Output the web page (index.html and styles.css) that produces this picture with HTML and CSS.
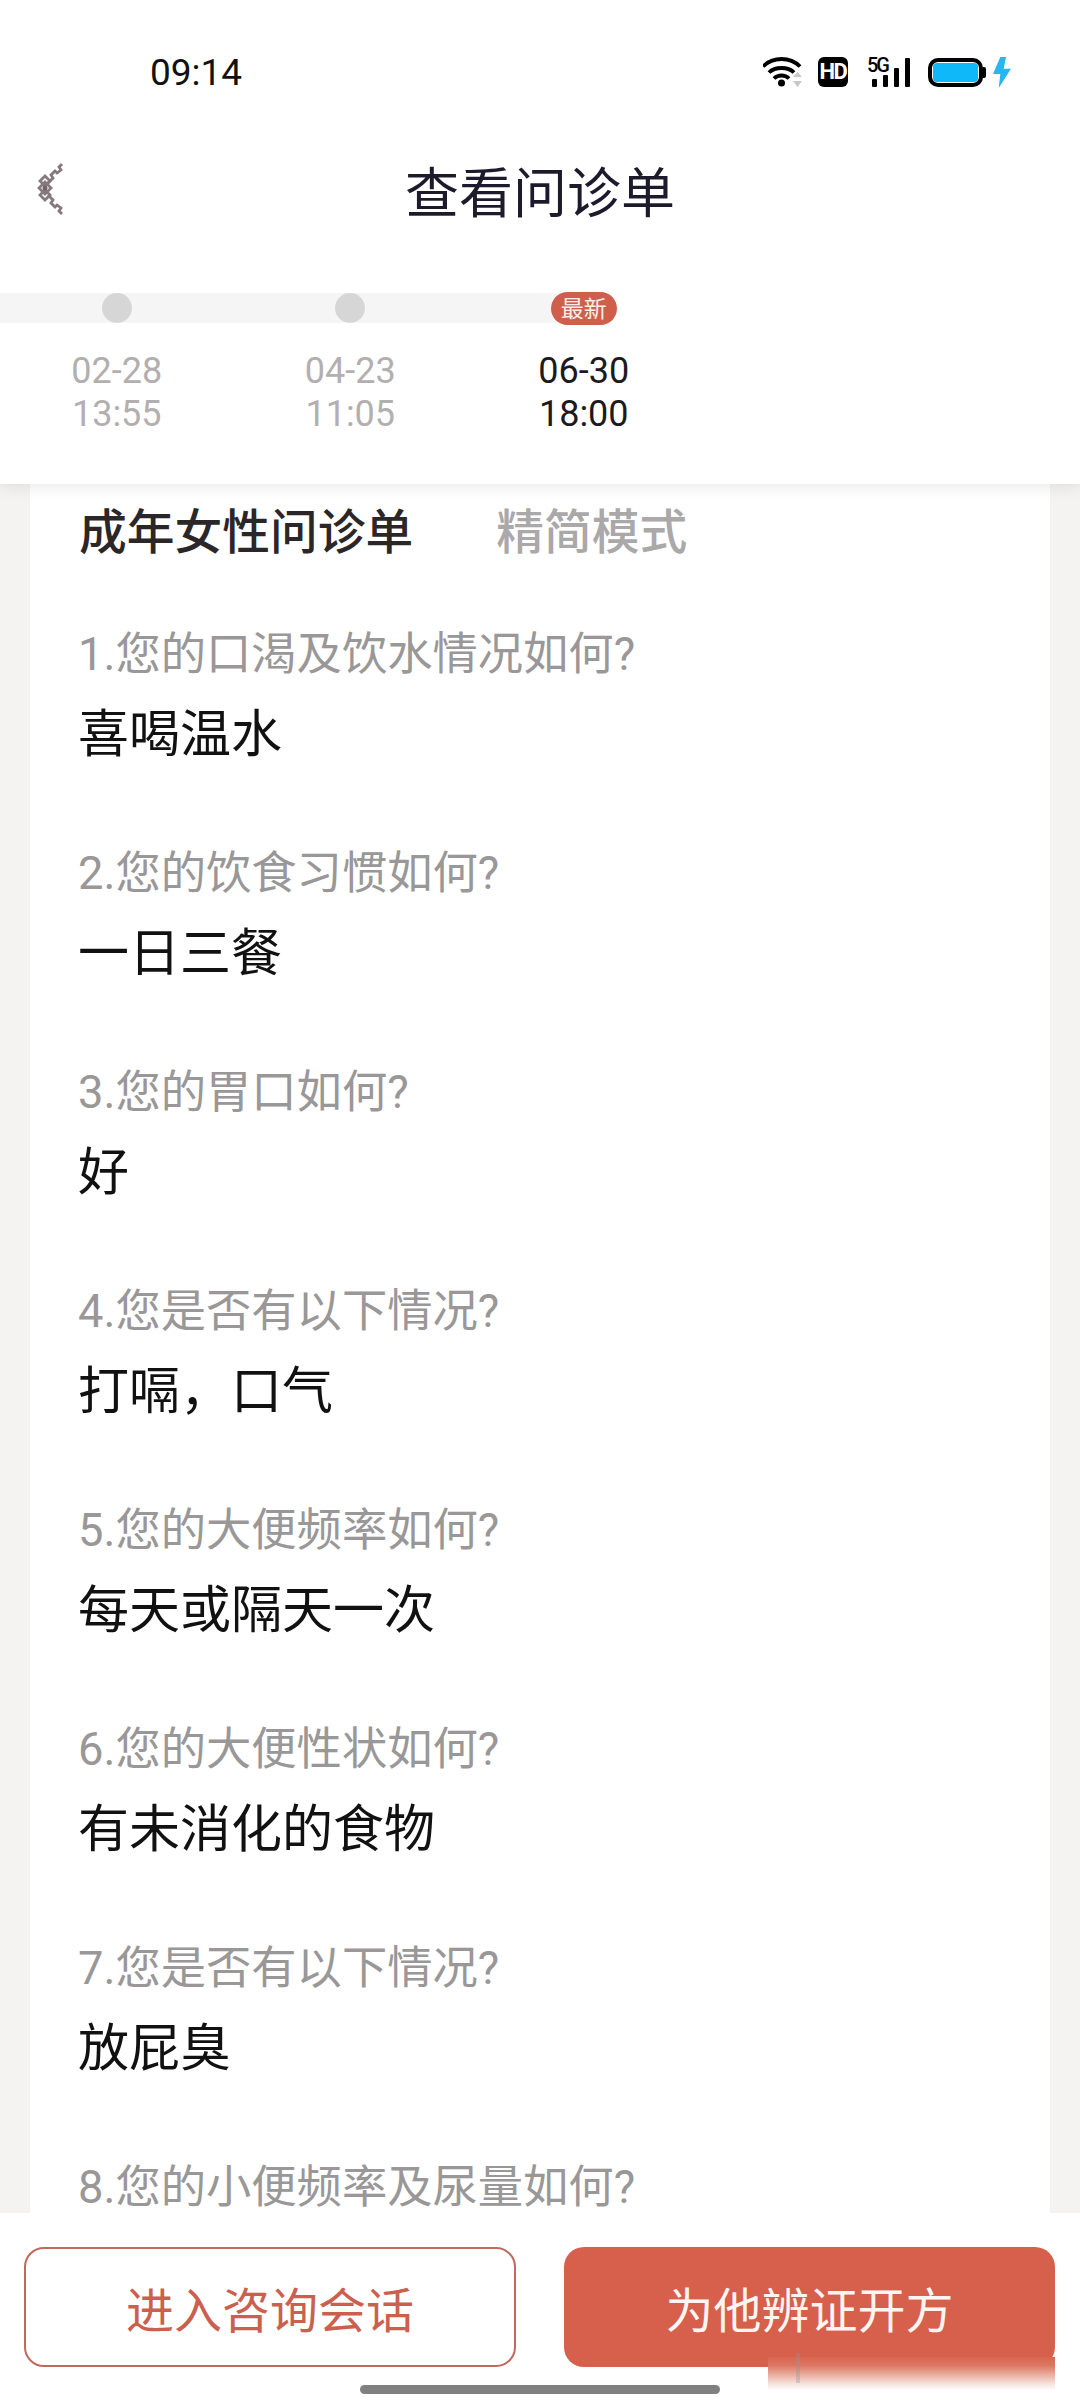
FILE: index.html

```html
<!DOCTYPE html>
<html lang="zh-CN">
<head>
  <meta charset="UTF-8">
  <meta name="viewport" content="width=device-width, initial-scale=1">
  <title>查看问诊单</title>
  <link rel="stylesheet" href="styles.css">
</head>
<body>
<div class="app">

  <header class="top">
    <div class="status">
      <span class="time">09:14</span>
      <div class="status-icons">
        <svg class="ic-wifi" width="42" height="30" viewBox="0 0 42 30">
          <g fill="none" stroke="#000" stroke-width="3.8">
            <path d="M0 9.500C10 -0.500 27 -0.500 37 9.500"/>
            <path d="M6 15.500C12 9.500 25 9.500 31 15.500"/>
            <path d="M11 21.500C15 17.500 22 17.500 26 21.500"/>
          </g>
          <circle cx="18.500" cy="26" r="3.500" fill="#000"/>
          <path d="M34.500 15l4.500 5h-9zM34.500 30l4.500-6h-9z" fill="#c8c8c8"/>
        </svg>
        <span class="ic-hd">HD</span>
        <div class="ic-signal">
          <span class="ic-5g">5G</span>
          <i class="bar b1"></i><i class="bar b2"></i><i class="bar b3"></i><i class="bar b4"></i>
        </div>
        <div class="ic-batt"><div class="batt-fill"></div></div>
        <i class="batt-tip"></i>
        <svg class="ic-bolt" width="18" height="31" viewBox="0 0 18 31">
          <path d="M7.300 0H13L10.700 11.700H18L5.700 31 7.300 17H0z" fill="#29b6f0"/>
        </svg>
      </div>
    </div>

    <div class="nav">
      <!-- back arrow in the app is a knotted pattern -->
      <svg class="back" width="30" height="56" viewBox="36 160 30 56">
        <g fill="none" stroke="#85797d" stroke-width="2.800">
          <path d="M62 164l-3 3 2 3-4 3-2-2-4 4 2 3-5 5"/>
          <path d="M62 214l-3-3 2-3-4-3-2 2-4-4 2-3-5-5"/>
          <path d="M39 188l6-6 6 6-6 6z"/>
          <path d="M45 176l5 5-5 5-5-5z"/>
          <path d="M45 190l5 5-5 5-5-5z"/>
        </g>
        <circle cx="45" cy="188" r="2.500" fill="#6f6468"/>
      </svg>
      <h1 class="nav-title">查看问诊单</h1>
    </div>

    <div class="timeline">
      <div class="tl-item">
        <div class="rail"><span class="dot"></span></div>
        <div class="tl-date">02-28<br>13:55</div>
      </div>
      <div class="tl-item">
        <div class="rail"><span class="dot"></span></div>
        <div class="tl-date">04-23<br>11:05</div>
      </div>
      <div class="tl-item active">
        <div class="rail rail-end"><span class="badge">最新</span></div>
        <div class="tl-date">06-30<br>18:00</div>
      </div>
    </div>
  </header>

  <main class="content">
    <div class="card">
      <div class="tabs">
        <span class="tab-on">成年女性问诊单</span>
        <span class="tab-off">精简模式</span>
      </div>

      <div class="qa">
        <p class="q">1.您的口渴及饮水情况如何?</p>
        <p class="a">喜喝温水</p>
      </div>
      <div class="qa">
        <p class="q">2.您的饮食习惯如何?</p>
        <p class="a">一日三餐</p>
      </div>
      <div class="qa">
        <p class="q">3.您的胃口如何?</p>
        <p class="a">好</p>
      </div>
      <div class="qa">
        <p class="q">4.您是否有以下情况?</p>
        <p class="a">打嗝，口气</p>
      </div>
      <div class="qa">
        <p class="q">5.您的大便频率如何?</p>
        <p class="a">每天或隔天一次</p>
      </div>
      <div class="qa">
        <p class="q">6.您的大便性状如何?</p>
        <p class="a">有未消化的食物</p>
      </div>
      <div class="qa">
        <p class="q">7.您是否有以下情况?</p>
        <p class="a">放屁臭</p>
      </div>
      <div class="qa">
        <p class="q">8.您的小便频率及尿量如何?</p>
      </div>
    </div>
  </main>

  <footer class="footer">
    <div class="btns">
      <button class="btn btn-line">进入咨询会话</button>
      <button class="btn btn-fill">为他辨证开方</button>
    </div>
    <div class="home-bar"></div>
    <div class="smear"><i></i></div>
  </footer>

</div>
</body>
</html>
```

FILE: styles.css

```css
* {
  box-sizing: border-box;
}
html, body {
  margin: 0;
  padding: 0;
}
body {
  width: 1080px;
  height: 2400px;
  overflow: hidden;
  background-color: #fff;
  font-family: Roboto, "Noto Sans CJK SC", sans-serif;
}
.app {
  display: flex;
  flex-direction: column;
  height: 2400px;
  background-color: #f4f3f1;
}

/* top part */
.top {
  position: relative;
  z-index: 2;
  height: 484px;
  background-color: #fff;
  box-shadow: 0 4px 14px rgba(0, 0, 0, 0.08);
}
.status {
  display: flex;
  align-items: center;
  height: 95px;
  padding: 49px 69px 0 150px;
}
.time {
  font-size: 37px;
  color: #111;
}
.status-icons {
  display: flex;
  align-items: center;
  margin-left: auto;
}
.ic-hd {
  width: 30px;
  height: 30px;
  margin-left: 13px;
  border-radius: 6px;
  background-color: #000;
  color: #fff;
  font-size: 22px;
  font-weight: 700;
  line-height: 30px;
  letter-spacing: -1.500px;
  text-align: center;
}
.ic-signal {
  position: relative;
  display: flex;
  align-items: flex-end;
  gap: 6px;
  width: 43px;
  height: 30px;
  margin-left: 19px;
  padding-left: 5px;
}
.ic-5g {
  position: absolute;
  left: 0;
  top: -2px;
  font-size: 20px;
  font-weight: 500;
  line-height: 20px;
  letter-spacing: -2px;
  color: #000;
}
.bar {
  width: 5px;
  border-radius: 1px;
  background-color: #000;
}
.b1 { height: 8px; }
.b2 { height: 12px; }
.b3 { height: 19px; }
.b4 { height: 29px; }
.ic-batt {
  width: 55px;
  height: 29px;
  margin-left: 18px;
  padding: 1px;
  border: 4px solid #000;
  border-radius: 10px;
}
.batt-fill {
  height: 100%;
  border-radius: 4px;
  background-color: #0fb8f8;
}
.batt-tip {
  width: 3px;
  height: 11px;
  border-radius: 0 2px 2px 0;
  background-color: #000;
}
.ic-bolt {
  margin-left: 7px;
}

.nav {
  position: relative;
  display: flex;
  align-items: center;
  justify-content: center;
  height: 192px;
  padding-bottom: 3px;
}
.back {
  position: absolute;
  left: 36px;
  top: 65px;
}
.nav-title {
  margin: 0;
  font-size: 54px;
  font-weight: 400;
  color: #1d1a2b;
}

.timeline {
  display: grid;
  grid-template-columns: repeat(3, 233.500px);
  padding-top: 6px;
}
.rail {
  display: flex;
  align-items: center;
  justify-content: center;
  height: 30px;
  background-color: #f5f5f5;
}
.rail-end {
  background: linear-gradient(to right, #f5f5f5 50%, transparent 50%);
}
.dot {
  width: 30px;
  height: 30px;
  border-radius: 50%;
  background-color: #d6d6d6;
}
.badge {
  width: 66px;
  height: 33px;
  border-radius: 17px;
  background-color: #cf5f4c;
  color: #fbeee9;
  font-size: 23px;
  line-height: 35px;
  text-align: center;
}
.tl-date {
  margin-top: 27px;
  font-size: 36px;
  line-height: 43px;
  text-align: center;
  color: #b3afaf;
}
.active .tl-date {
  color: #1c1a1c;
}

/* questions */
.content {
  flex: 1;
  min-height: 0;
  padding: 0 30px;
  overflow: hidden;
}
.card {
  height: 100%;
  padding: 0 48px 0 49px;
  background-color: #fff;
}
.tabs {
  display: flex;
  align-items: center;
  gap: 83px;
  height: 89px;
  font-size: 47.750px;
  font-weight: 500;
}
.tab-on {
  color: #2b2728;
}
.tab-off {
  color: #aaa8a8;
}
.qa {
  margin-top: 52px;
  margin-bottom: 27px;
}
.qa + .qa {
  margin-top: 74px;
  margin-bottom: 0;
}
.q, .a {
  margin: 0;
}
.q {
  margin-left: -1px;
  font-size: 45.300px;
  line-height: 60px;
  color: #999797;
}
.a {
  margin-top: 15px;
  margin-left: -1px;
  font-size: 51px;
  line-height: 70px;
  color: #111;
}

/* bottom bar */
.footer {
  position: relative;
  z-index: 3;
  height: 187px;
  padding-top: 34px;
  background-color: #fff;
}
.btns {
  display: flex;
  gap: 48px;
  padding: 0 24px;
}
.btn {
  width: 492px;
  height: 120px;
  border-radius: 20px;
  font-family: inherit;
  font-size: 48px;
}
.btn-line {
  border: 2px solid #c0695c;
  background-color: #fff;
  color: #cb604f;
}
.btn-fill {
  width: 491px;
  border: none;
  background-color: #d6604b;
  color: #fdf5f2;
}
.home-bar {
  width: 360px;
  height: 9px;
  margin: 18px auto 0;
  border-radius: 5px;
  background-color: #808080;
}
/* faded smudge sitting over the corner of the right button */
.smear {
  position: absolute;
  left: 768px;
  top: 144px;
  width: 287px;
  height: 33px;
  background: linear-gradient(to bottom, #d9654f 0%, #dc7562 25%, #e9a797 50%, #f6e0da 80%, #fff 100%);
}
.smear i {
  position: absolute;
  left: 28px;
  top: -4px;
  width: 4px;
  height: 30px;
  background-color: rgba(150, 150, 150, 0.35);
}
```
